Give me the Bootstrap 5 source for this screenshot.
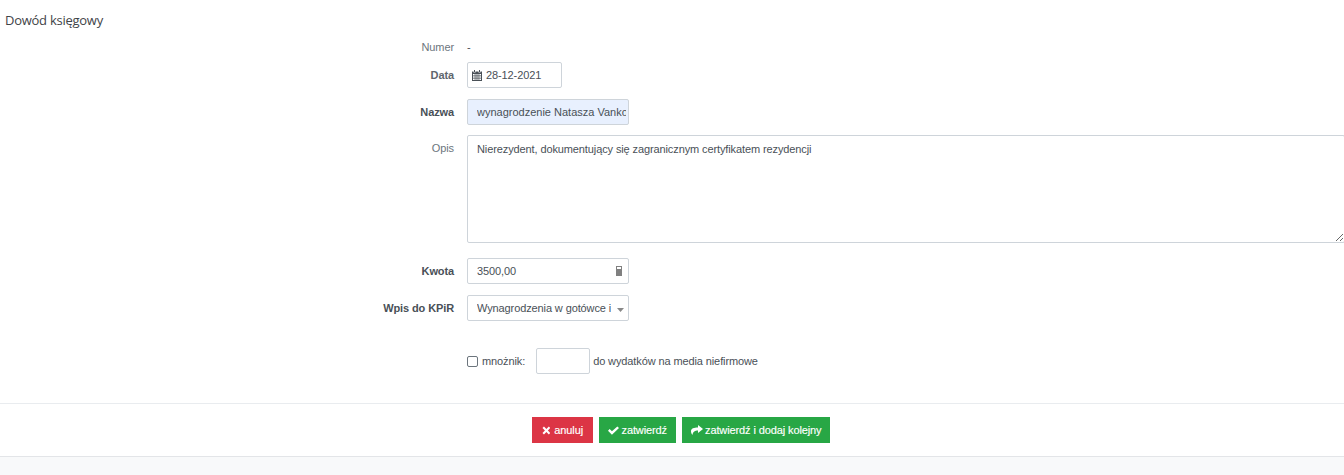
<!DOCTYPE html>
<html lang="pl">
<head>
<meta charset="utf-8">
<title>Dowód księgowy</title>
<link rel="stylesheet" href="https://cdn.jsdelivr.net/npm/bootstrap@5.3.0/dist/css/bootstrap.min.css">
<style>
html,body{height:475px;overflow:hidden}
body{font-family:"Liberation Sans",Arial,sans-serif;font-size:11px;color:#495057;background:#f8f9fa;letter-spacing:-.11px}
.sheet{background:#fff;height:457px;border-bottom:1px solid #e3e5e8;display:flex;flex-direction:column}
.doc-title{font-family:"Open Sans",sans-serif;font-size:13px;color:#3f4448;margin:0;padding:11px 0 0 5px;height:39px;line-height:18px;font-weight:400;letter-spacing:-.26px}
.form-area{height:364px;overflow:hidden}
.field{display:flex;gap:13px;margin-bottom:10px}
.field-plain{height:16px;margin-bottom:7px}
.field-plain .lab{line-height:16px}
.field-tight{margin-bottom:11px}
.field-memo{margin-bottom:15px}
.field-last{margin-bottom:27px}
.lab{width:454px;flex:none;text-align:right;line-height:26px;color:#6c757d;margin:0}
.lab.strong{font-weight:700;color:#495057}
.lab.soft{font-weight:700;color:#5f666d}
.lab.top{line-height:14px;padding-top:6px}
.val{line-height:16px;color:#495057}
.fld.form-control,.fld.form-select{height:26px;min-height:0;border:1px solid #ced4da;border-radius:2px;font-size:11px;letter-spacing:-.11px;line-height:14px;color:#495057;padding:0 9px;box-shadow:none}
.holder{position:relative;flex:none}
.w-date{width:95px}
.w-med{width:162px}
.fld.w-date{padding-left:18px}
.fld.autofilled{background:#e8f0fe;padding-right:2px;letter-spacing:0}
.fld.kwota{padding-right:22px}
.fld.form-select{padding-right:17px;background-image:url("data:image/svg+xml,%3Csvg xmlns='http://www.w3.org/2000/svg' width='7' height='4'%3E%3Cpath d='M0 0h7L3.5 4z' fill='%23888'/%3E%3C/svg%3E");background-size:7px 4px;background-position:right 4px top 12px;background-repeat:no-repeat}
.pin-date{position:absolute;left:5px;top:8px}
.pin-calc{position:absolute;right:7px;top:8px}
.fld.memo{width:878px;height:108px;flex:none;padding:6px 9px}
.mult{display:flex;align-items:center;margin-left:467px;color:#495057;height:26px}
.tick.form-check-input{width:11px;height:11px;border:1px solid #6c757d;border-radius:2px;margin:0 4px 0 0;flex:none}
.fld.mult-input{width:54px;margin:0 3px 0 11px;padding:0 4px}
.foot{border-top:1px solid #e9ecef;height:53px;display:flex;justify-content:center;gap:6px;padding:13px 0 0 18px}
.act.btn{height:26px;border:0;border-radius:0;padding:0 9px;font-size:11px;letter-spacing:-.11px;font-weight:400;color:#fff;display:inline-flex;align-items:center;line-height:1;-webkit-text-stroke:.15px #fff}
.gap-a{gap:4px}.gap-b{gap:3px}.gap-c{gap:2px}
.act.act-red{background:#dc3545;padding:0 9.5px 0 10px;width:61px}
.act.act-green{background:#28a745}
</style>
</head>
<body>
<div class="sheet">
  <h1 class="doc-title">Dowód księgowy</h1>
  <form class="form-area" onsubmit="return false">
    <div class="field field-plain">
      <div class="lab">Numer</div>
      <div class="val">-</div>
    </div>
    <div class="field field-tight">
      <label class="lab soft" for="f-data">Data</label>
      <div class="holder">
        <input id="f-data" class="form-control fld w-date" value="28-12-2021">
        <svg class="pin-date" width="10" height="11" viewBox="0 0 10 11" fill="#495057"><path fill-rule="evenodd" d="M2 0h1v2H2zM7 0h1v2H7zM0 1.500h1.500v1h2v-1h3v1h2v-1H10V11H0zM1 4v1.500h1.700V4zm2.400 0v1.500h1.200V4zm2 0v1.500h1.200V4zm1.900 0v1.500H9V4zM1 6.200v1.600h1.700V6.200zm2.400 0v1.600h1.200V6.200zm2 0v1.600h1.200V6.200zm1.900 0v1.600H9V6.200zM1 8.500V10h1.700V8.500zm2.400 0V10h1.200V8.500zm2 0V10h1.200V8.500zm1.900 0V10H9V8.500z"/></svg>
      </div>
    </div>
    <div class="field">
      <label class="lab strong" for="f-nazwa">Nazwa</label>
      <input id="f-nazwa" class="form-control fld w-med autofilled" value="wynagrodzenie Natasza Vanko">
    </div>
    <div class="field field-memo">
      <label class="lab top" for="f-opis">Opis</label>
      <textarea id="f-opis" class="form-control fld memo">Nierezydent, dokumentujący się zagranicznym certyfikatem rezydencji</textarea>
    </div>
    <div class="field field-tight">
      <label class="lab strong" for="f-kwota">Kwota</label>
      <div class="holder">
        <input id="f-kwota" class="form-control fld w-med kwota" value="3500,00">
        <svg class="pin-calc" width="6" height="10" viewBox="0 0 6 10" fill="#808080"><path fill-rule="evenodd" d="M0 0h6v10H0zM1 1v2h4V1z"/></svg>
      </div>
    </div>
    <div class="field field-last">
      <label class="lab strong" for="f-kpir">Wpis do KPiR</label>
      <select id="f-kpir" class="form-select fld w-med"><option>Wynagrodzenia w gotówce i w naturze</option></select>
    </div>
    <div class="mult">
      <input class="form-check-input tick" type="checkbox" id="f-mn"><label for="f-mn">mnożnik:</label>
      <input class="form-control fld mult-input" aria-label="mnożnik"><span>do wydatków na media niefirmowe</span>
    </div>
  </form>
  <div class="foot">
    <button type="button" class="btn act act-red gap-a"><svg width="9" height="9" viewBox="0 0 9 9" fill="#fff"><path d="M2 .5 4.500 3 7 .5 8.500 2 6 4.500 8.500 7 7 8.500 4.500 6 2 8.500.5 7 3 4.500.5 2z"/></svg>anuluj</button>
    <button type="button" class="btn act act-green gap-b"><svg width="11" height="9" viewBox="0 0 12 9" fill="#fff"><path d="M4.300 9 0 4.700 1.800 2.900l2.500 2.500L10.200 0 12 1.800z"/></svg>zatwierdź</button>
    <button type="button" class="btn act act-green gap-c"><svg width="12" height="10" viewBox="0 0 12 10" fill="#fff"><path d="M7 0l5 4-5 4V5.500C4 5.500 2 6.500 1.500 10 .3 8.500 0 7.200 0 6.200 0 3.500 3 2.500 7 2.500z"/></svg>zatwierdź i dodaj kolejny</button>
  </div>
</div>
</body>
</html>
